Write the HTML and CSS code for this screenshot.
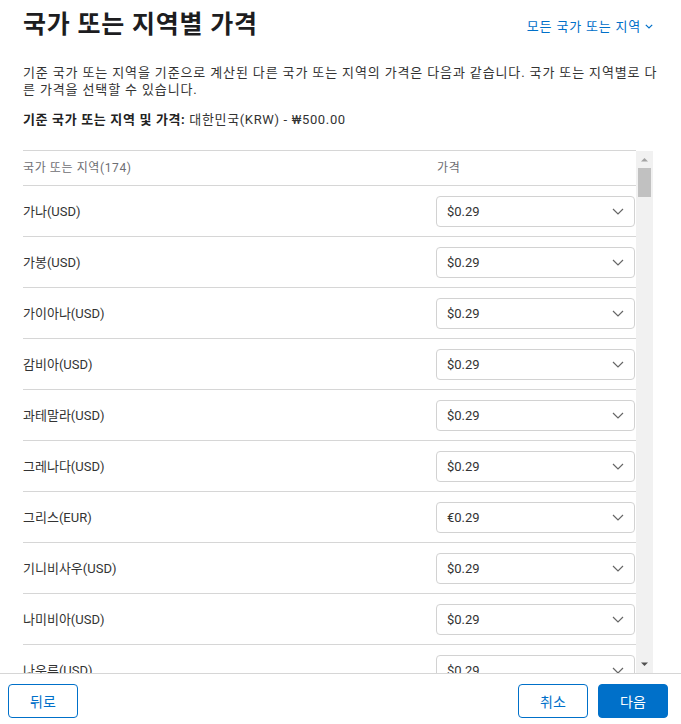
FILE: index.html
```html
<!DOCTYPE html>
<html lang="ko">
<head>
<meta charset="utf-8">
<title>국가 또는 지역별 가격</title>
<link rel="stylesheet" href="styles.css">
</head>
<body>
<div class="page">
  <div class="content">
    <div class="head">
      <h1 class="title">국가 또는 지역별 가격</h1>
      <a class="all-link" href="#">모든 국가 또는 지역<svg class="link-chev" width="8" height="5" viewBox="0 0 8 5"><path d="M0.8 0.8 L4 4 L7.2 0.8" fill="none" stroke="#0070c9" stroke-width="1.2"/></svg></a>
    </div>
    <p class="desc">기준 국가 또는 지역을 기준으로 계산된 다른 국가 또는 지역의 가격은 다음과 같습니다. 국가 또는 지역별로 다른 가격을 선택할 수 있습니다.</p>
    <p class="base"><strong>기준 국가 또는 지역 및 가격:</strong> 대한민국(KRW) - ₩500.00</p>
    <div class="table-wrap">
      <div class="list" id="list">
        <div class="table" id="rows">
          <div class="row header"><span>국가 또는 지역(174)</span><span>가격</span></div>
          <div class="row"><span>가나(USD)</span><div class="select"><span>$0.29</span><svg class="chev" width="12" height="7" viewBox="0 0 12 7"><path d="M1 1 L6 6 L11 1" fill="none" stroke="#666" stroke-width="1.2"/></svg></div></div>
          <div class="row"><span>가봉(USD)</span><div class="select"><span>$0.29</span><svg class="chev" width="12" height="7" viewBox="0 0 12 7"><path d="M1 1 L6 6 L11 1" fill="none" stroke="#666" stroke-width="1.2"/></svg></div></div>
          <div class="row"><span>가이아나(USD)</span><div class="select"><span>$0.29</span><svg class="chev" width="12" height="7" viewBox="0 0 12 7"><path d="M1 1 L6 6 L11 1" fill="none" stroke="#666" stroke-width="1.2"/></svg></div></div>
          <div class="row"><span>감비아(USD)</span><div class="select"><span>$0.29</span><svg class="chev" width="12" height="7" viewBox="0 0 12 7"><path d="M1 1 L6 6 L11 1" fill="none" stroke="#666" stroke-width="1.2"/></svg></div></div>
          <div class="row"><span>과테말라(USD)</span><div class="select"><span>$0.29</span><svg class="chev" width="12" height="7" viewBox="0 0 12 7"><path d="M1 1 L6 6 L11 1" fill="none" stroke="#666" stroke-width="1.2"/></svg></div></div>
          <div class="row"><span>그레나다(USD)</span><div class="select"><span>$0.29</span><svg class="chev" width="12" height="7" viewBox="0 0 12 7"><path d="M1 1 L6 6 L11 1" fill="none" stroke="#666" stroke-width="1.2"/></svg></div></div>
          <div class="row"><span>그리스(EUR)</span><div class="select"><span>€0.29</span><svg class="chev" width="12" height="7" viewBox="0 0 12 7"><path d="M1 1 L6 6 L11 1" fill="none" stroke="#666" stroke-width="1.2"/></svg></div></div>
          <div class="row"><span>기니비사우(USD)</span><div class="select"><span>$0.29</span><svg class="chev" width="12" height="7" viewBox="0 0 12 7"><path d="M1 1 L6 6 L11 1" fill="none" stroke="#666" stroke-width="1.2"/></svg></div></div>
          <div class="row"><span>나미비아(USD)</span><div class="select"><span>$0.29</span><svg class="chev" width="12" height="7" viewBox="0 0 12 7"><path d="M1 1 L6 6 L11 1" fill="none" stroke="#666" stroke-width="1.2"/></svg></div></div>
          <div class="row"><span>나우루(USD)</span><div class="select"><span>$0.29</span><svg class="chev" width="12" height="7" viewBox="0 0 12 7"><path d="M1 1 L6 6 L11 1" fill="none" stroke="#666" stroke-width="1.2"/></svg></div></div>
        </div>
      </div>
      <div class="scrollbar" aria-hidden="true">
        <div class="sb-btn"><svg width="17" height="17" viewBox="0 0 17 17"><polygon points="5,10.5 8.5,7 12,10.5" fill="#a3a3a3"/></svg></div>
        <div class="sb-track" id="track"><div class="sb-thumb" id="thumb"></div></div>
        <div class="sb-btn"><svg width="17" height="17" viewBox="0 0 17 17"><polygon points="5,6.5 8.5,10 12,6.5" fill="#505050"/></svg></div>
      </div>
    </div>
  </div>
  <div class="footer">
    <button class="btn btn-outline">뒤로</button>
    <div class="footer-right">
      <button class="btn btn-outline">취소</button>
      <button class="btn btn-primary">다음</button>
    </div>
  </div>
</div>
<script src="script.js"></script>
</body>
</html>
```
FILE: styles.css
```css
* { box-sizing: border-box; }
html, body { margin: 0; padding: 0; background: #fff; }
body {
  font-family: Roboto, "Noto Sans CJK KR", sans-serif;
  color: #333;
  font-size: 13px;
}
.page {
  height: 724px;
  display: flex;
  flex-direction: column;
  overflow: hidden;
}
.content {
  padding: 10px 28px 0 23px;
  flex: 1;
  display: flex;
  flex-direction: column;
  min-height: 0;
}
.head {
  display: flex;
  justify-content: space-between;
  align-items: center;
  height: 30px;
}
.title {
  margin: 0;
  font-size: 25px;
  line-height: 30px;
  font-weight: 700;
  color: #1d1d1f;
  letter-spacing: 0.75px;
}
.all-link {
  color: #0070c9;
  text-decoration: none;
  font-size: 13px;
  line-height: 17px;
  display: flex;
  align-items: center;
  gap: 4px;
  margin-top: 2px;
  letter-spacing: 0.8px;
}
.desc {
  margin: 24px -6px 0 0;
  line-height: 17px;
  font-size: 13px;
  color: #333;
  letter-spacing: 0.87px;
  word-break: break-all;
}
.base {
  margin: 13px 0 0 0;
  line-height: 17px;
  color: #333;
  letter-spacing: 0.65px;
}
.base strong { font-weight: 700; color: #222; }
.table-wrap {
  margin-top: 22px;
  flex: 1;
  min-height: 0;
  display: flex;
}
.list {
  flex: 1;
  min-width: 0;
  border-top: 1px solid #d6d6d6;
  overflow-y: auto;
  scrollbar-width: none;
}
.list::-webkit-scrollbar { display: none; }
.scrollbar {
  width: 17px;
  margin-top: 1px;
  background: #f1f1f1;
  display: flex;
  flex-direction: column;
}
.sb-btn { height: 17px; flex: none; }
.sb-btn svg { display: block; }
.sb-track { flex: 1; position: relative; }
.sb-thumb {
  margin: 0 2px;
  height: 29px;
  background: #c1c1c1;
}
.row {
  display: grid;
  grid-template-columns: 413px 199px;
  align-items: center;
  height: 51px;
  border-bottom: 1px solid #d6d6d6;
  line-height: 17px;
}
.row.header {
  height: 35px;
  color: #6e6e73;
  font-size: 12px;
  letter-spacing: 0.6px;
}
.row.header span:last-child { padding-left: 1px; }
.select {
  height: 31px;
  border: 1px solid #d2d2d2;
  border-radius: 4px;
  display: flex;
  align-items: center;
  justify-content: space-between;
  padding: 0 10px 0 10px;
  color: #333;
  background: #fff;
}
.chev { display: block; }
.footer {
  border-top: 1px solid #d6d6d6;
  height: 51px;
  display: flex;
  justify-content: space-between;
  align-items: flex-start;
  padding: 10px 13px 0 8px;
}
.footer-right { display: flex; gap: 10px; }
.btn {
  width: 70px;
  height: 34px;
  border-radius: 4px;
  font-family: Roboto, "Noto Sans CJK KR", sans-serif;
  font-size: 14px;
  cursor: pointer;
}
.btn-outline {
  background: #fff;
  color: #0070c9;
  border: 1px solid #0070c9;
}
.btn-primary {
  background: #0070c9;
  color: #fff;
  border: 1px solid #0070c9;
}
```
FILE: script.js
```js
(function () {
  var eur = ["네덜란드","독일","라트비아","룩셈부르크","리투아니아","몰타","벨기에","스페인","슬로바키아","슬로베니아","아일랜드","에스토니아","오스트리아","이탈리아","크로아티아","포르투갈","프랑스","핀란드","사이프러스","몬테네그로","코소보"];
  var names = ["나이지리아","남아프리카 공화국","네덜란드","네팔","노르웨이","뉴질랜드","니제르","니카라과","대만","덴마크","도미니카","도미니카 공화국","독일","라오스","라이베리아","라트비아","러시아","레바논","루마니아","룩셈부르크","르완다","리비아","리투아니아","마다가스카르","마카오","말라위","말레이시아","말리","멕시코","모로코","모리셔스","모리타니","모잠비크","몬테네그로","몬트세랫","몰도바","몰디브","몰타","몽골","미국","미크로네시아","바누아투","바레인","바베이도스","바하마","방글라데시","버뮤다","베냉","베네수엘라","베트남","벨기에","벨라루스","벨리즈","보스니아 헤르체고비나","보츠와나","볼리비아","부룬디","부르키나파소","부탄","북마케도니아","불가리아","브라질","브루나이","사우디아라비아","사이프러스","세네갈","세르비아","세이셸","세인트루시아","세인트빈센트 그레나딘","세인트키츠 네비스","솔로몬 제도","수리남","스리랑카","스웨덴","스위스","스페인","슬로바키아","슬로베니아","시에라리온","싱가포르","아랍에미리트","아르메니아","아르헨티나","아이슬란드","아일랜드","아제르바이잔","아프가니스탄","안티구아 바부다","알바니아","알제리","앙골라","앵귈라","에스토니아","에콰도르","엘살바도르","영국","영국령 버진아일랜드","예멘","오만","오스트레일리아","오스트리아","온두라스","요르단","우간다","우루과이","우즈베키스탄","우크라이나","이라크","이스라엘","이집트","이탈리아","인도","인도네시아","일본","자메이카","잠비아","중국 본토","짐바브웨","차드","체코","칠레","카메룬","카보베르데","카자흐스탄","카타르","캄보디아","캐나다","케냐","케이맨 제도","코소보","코스타리카","코트디부아르","콜롬비아","콩고","콩고 민주 공화국","쿠웨이트","크로아티아","키르기스스탄","타지키스탄","탄자니아","태국","터크스 케이커스 제도","튀르키예","튀니지","통가","투르크메니스탄","트리니다드 토바고","파나마","파라과이","파키스탄","파푸아뉴기니","팔라우","페루","포르투갈","폴란드","프랑스","피지","핀란드","필리핀","헝가리","홍콩"];
  var container = document.getElementById("rows");
  var chev = '<svg class="chev" width="12" height="7" viewBox="0 0 12 7"><path d="M1 1 L6 6 L11 1" fill="none" stroke="#666" stroke-width="1.2"/></svg>';
  var html = "";
  names.forEach(function (n) {
    var isEur = eur.indexOf(n) !== -1;
    var cur = isEur ? "EUR" : "USD";
    var price = isEur ? "€0.29" : "$0.29";
    html += '<div class="row"><span>' + n + '(' + cur + ')</span><div class="select"><span>' + price + '</span>' + chev + '</div></div>';
  });
  container.insertAdjacentHTML("beforeend", html);

  var list = document.getElementById("list");
  var track = document.getElementById("track");
  var thumb = document.getElementById("thumb");
  function update() {
    var th = track.clientHeight;
    var h = Math.max(20, Math.round(th * list.clientHeight / list.scrollHeight));
    var max = list.scrollHeight - list.clientHeight;
    var top = max > 0 ? Math.round((th - h) * list.scrollTop / max) : 0;
    thumb.style.height = h + "px";
    thumb.style.transform = "translateY(" + top + "px)";
  }
  list.addEventListener("scroll", update);
  window.addEventListener("resize", update);
  update();
})();
```
